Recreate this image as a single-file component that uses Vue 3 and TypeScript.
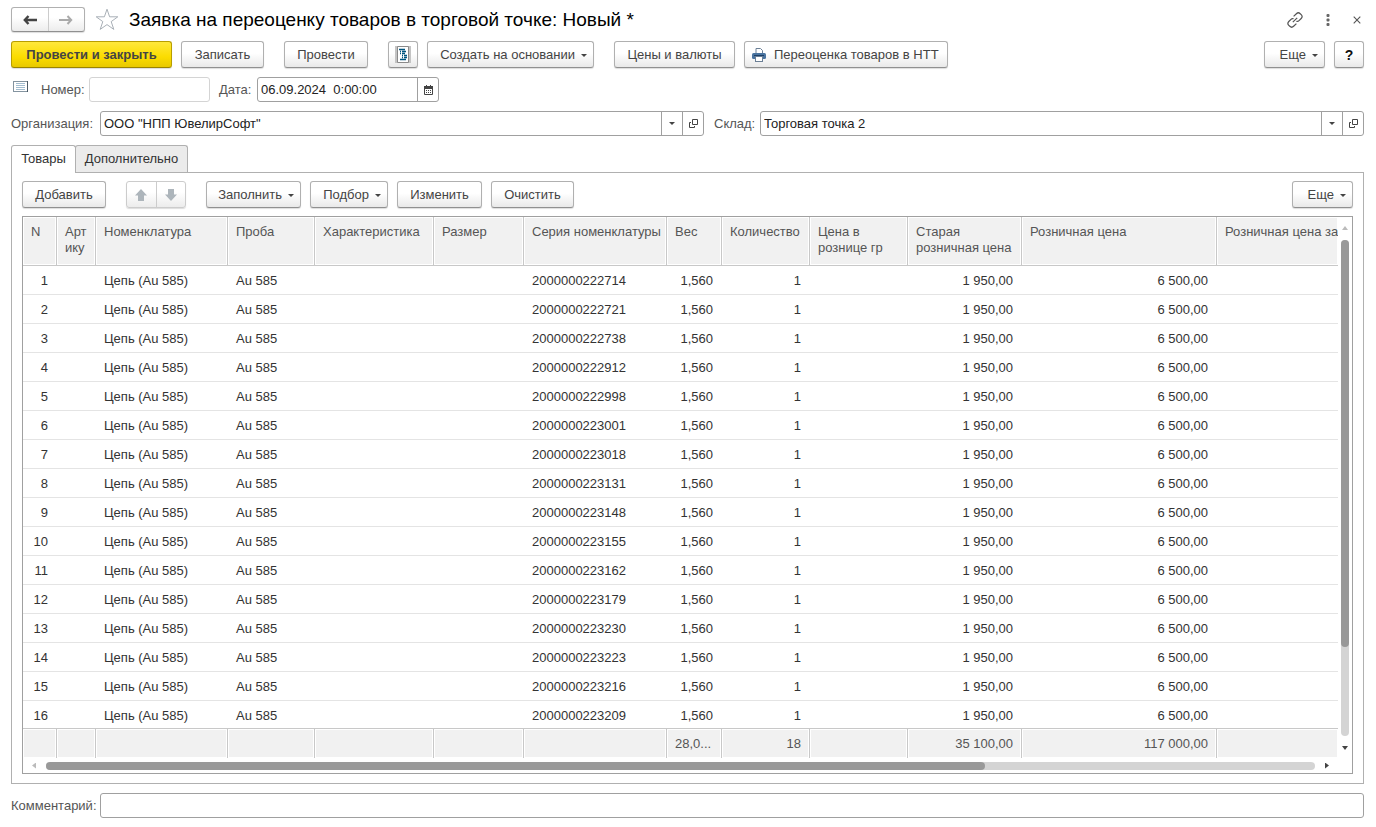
<script setup lang="ts">
import { ref } from 'vue'

interface Row {
  n: number
  item: string
  probe: string
  series: string
  weight: string
  qty: number
  oldPrice: string
  price: string
}

const seriesCodes: string[] = [
  '2000000222714', '2000000222721', '2000000222738', '2000000222912',
  '2000000222998', '2000000223001', '2000000223018', '2000000223131',
  '2000000223148', '2000000223155', '2000000223162', '2000000223179',
  '2000000223230', '2000000223223', '2000000223216', '2000000223209',
]

const rows: Row[] = seriesCodes.map((series, i) => ({
  n: i + 1,
  item: 'Цепь (Au 585)',
  probe: 'Au 585',
  series,
  weight: '1,560',
  qty: 1,
  oldPrice: '1 950,00',
  price: '6 500,00',
}))

const number = ref('')
const date = ref('06.09.2024  0:00:00')
const organization = ref('ООО "НПП ЮвелирСофт"')
const warehouse = ref('Торговая точка 2')
const comment = ref('')
const tab = ref<'goods' | 'extra'>('goods')
</script>

<template>
  <main class="page">
    <header class="title-bar">
      <div class="pair nav-pair">
        <button type="button" aria-label="Назад">
          <svg width="14" height="10" viewBox="0 0 14 10"><path d="M5.5 1 1.8 5 5.5 9M2 5H14" fill="none" stroke="#444" stroke-width="2.4" /></svg>
        </button>
        <button type="button" aria-label="Вперед">
          <svg width="14" height="10" viewBox="0 0 14 10"><path d="M8.5 1 12.2 5 8.5 9M12 5H0" fill="none" stroke="#aaa" stroke-width="2" /></svg>
        </button>
      </div>
      <button type="button" class="bare star" aria-label="Избранное">
        <svg width="24" height="23" viewBox="0 0 24 23"><path d="M12 1.2 14.6 8.8H22.8L16.2 13.6 18.8 21.4 12 16.6 5.2 21.4 7.8 13.6 1.2 8.8H9.4Z" fill="#fff" stroke="#a9b0b7" stroke-width="1" /></svg>
      </button>
      <h1>Заявка на переоценку товаров в торговой точке: Новый *</h1>
      <div class="window-tools">
        <button type="button" class="bare" aria-label="Ссылка">
          <svg width="16" height="16" viewBox="0 0 16 16" fill="none" stroke="#555" stroke-width="1.2">
            <path d="M6.6 4.4 9.4 1.7a2.7 2.7 0 0 1 3.8 0l1 1a2.7 2.7 0 0 1 0 3.8L12 8.7a2.4 2.4 0 0 1-2.6.5" />
            <path d="M9.4 11.6 6.6 14.3a2.7 2.7 0 0 1-3.8 0l-1-1a2.7 2.7 0 0 1 0-3.8L4 7.3a2.4 2.4 0 0 1 2.6-.5" />
            <path d="M5.8 10.2 10.2 5.8" />
          </svg>
        </button>
        <button type="button" class="bare" aria-label="Меню">
          <svg width="4" height="12" viewBox="0 0 4 12" fill="#666"><rect x="0.5" y="0" width="3" height="3" rx="1" /><rect x="0.5" y="4.5" width="3" height="3" rx="1" /><rect x="0.5" y="9" width="3" height="3" rx="1" /></svg>
        </button>
        <button type="button" class="bare" aria-label="Закрыть">
          <svg width="8" height="8" viewBox="0 0 8 8"><path d="M0.7 0.7 7.3 7.3M7.3 0.7 0.7 7.3" stroke="#555" stroke-width="1.1" /></svg>
        </button>
      </div>
    </header>

    <div class="toolbar">
      <button type="button" class="btn primary w-post-close">Провести и закрыть</button>
      <button type="button" class="btn w-xs">Записать</button>
      <button type="button" class="btn w-s spaced">Провести</button>
      <button type="button" class="btn square spaced" aria-label="Движения документа">
        <svg width="16" height="17" viewBox="0 0 16 17">
          <path d="M0 0H16V17H0Z" fill="#c4c4c4" />
          <path d="M2.5 0.5H13.5V16.5H2.5Z" fill="#fff" stroke="#8a8a8a" />
          <path d="M4 3.5H10M5 5.5H6M7 5.5H11M5 7.5H6M7 7.5H10M7 9.5H8M9 9.5H12M7 11.5H8M9 11.5H12M5 13.5H11" stroke="#00557f" stroke-width="1.4" />
        </svg>
      </button>
      <button type="button" class="btn w-create">Создать на основании<i class="caret"></i></button>
      <button type="button" class="btn w-prices spaced">Цены и валюты</button>
      <button type="button" class="btn w-print">
        <svg class="printer" width="14" height="14" viewBox="0 0 14 14">
          <path d="M4 5V0.5H8.5L10.5 2.5V5" fill="#fff" stroke="#6b7f96" />
          <rect x="0" y="5" width="14" height="6" rx="1.5" fill="#4a74a0" />
          <rect x="2" y="7" width="10" height="1" fill="#1d3f66" />
          <rect x="3.5" y="8.5" width="7" height="5" fill="#fff" stroke="#6b7f96" />
        </svg>Переоценка товаров в НТТ
      </button>
      <button type="button" class="btn w-more push">Еще<i class="caret"></i></button>
      <button type="button" class="btn square help">?</button>
    </div>

    <div class="field-row">
      <svg class="list-icon" width="15" height="11" viewBox="0 0 15 11">
        <rect x="0.5" y="0.5" width="14" height="10" fill="#fff" stroke="#8494a0" />
        <path d="M14.5 0V11" stroke="#4b5a66" />
        <path d="M3 2.5H12M3 4.5H12M3 6.5H12M3 8.5H12" stroke="#a3bdd0" />
      </svg>
      <label for="doc-number" class="label-number">Номер:</label>
      <input id="doc-number" v-model="number" class="box number" type="text" />
      <label for="doc-date" class="label-date">Дата:</label>
      <div class="box combo date">
        <input id="doc-date" v-model="date" type="text" />
        <button type="button" aria-label="Календарь">
          <svg width="9" height="10" viewBox="0 0 9 10">
            <path d="M0.5 1.5H8.5V9.5H0.5Z" fill="#fff" stroke="#444" />
            <path d="M0 1H9V4H0Z" fill="#444" />
            <path d="M2.5 0V2M6.5 0V2" stroke="#444" />
            <path d="M2 5.5H8M2 7.5H8" stroke="#444" stroke-dasharray="1 1" />
          </svg>
        </button>
      </div>
    </div>

    <div class="field-row">
      <label for="organization" class="label-main">Организация:</label>
      <div class="box combo grow">
        <input id="organization" v-model="organization" type="text" />
        <button type="button" aria-label="Выбрать организацию"><i class="caret"></i></button>
        <button type="button" aria-label="Открыть организацию">
          <svg width="9" height="9" viewBox="0 0 9 9" fill="none" stroke="#444"><path d="M3.5 0.5H8.5V5.5H3.5Z" /><path d="M2 3.5H0.5V8.5H5.5V7" /></svg>
        </button>
      </div>
      <label for="warehouse" class="label-stock">Склад:</label>
      <div class="box combo grow">
        <input id="warehouse" v-model="warehouse" type="text" />
        <button type="button" aria-label="Выбрать склад"><i class="caret"></i></button>
        <button type="button" aria-label="Открыть склад">
          <svg width="9" height="9" viewBox="0 0 9 9" fill="none" stroke="#444"><path d="M3.5 0.5H8.5V5.5H3.5Z" /><path d="M2 3.5H0.5V8.5H5.5V7" /></svg>
        </button>
      </div>
    </div>

    <div class="tabs" role="tablist">
      <button type="button" role="tab" class="tab-goods" :class="{ active: tab === 'goods' }" :aria-selected="tab === 'goods'" @click="tab = 'goods'">Товары</button>
      <button type="button" role="tab" class="tab-extra" :class="{ active: tab === 'extra' }" :aria-selected="tab === 'extra'" @click="tab = 'extra'">Дополнительно</button>
    </div>

    <section class="panel">
      <div class="toolbar inner">
        <button type="button" class="btn w-s">Добавить</button>
        <div class="pair move-pair">
          <button type="button" aria-label="Переместить вверх">
            <svg width="12" height="12" viewBox="0 0 12 12"><path d="M6 0 12 6.5H9V12H3V6.5H0Z" fill="#adb5bb" /></svg>
          </button>
          <button type="button" aria-label="Переместить вниз">
            <svg width="12" height="12" viewBox="0 0 12 12"><path d="M6 12 12 5.5H9V0H3V5.5H0Z" fill="#adb5bb" /></svg>
          </button>
        </div>
        <button type="button" class="btn w-fill spaced">Заполнить<i class="caret"></i></button>
        <button type="button" class="btn w-pick">Подбор<i class="caret"></i></button>
        <button type="button" class="btn w-edit">Изменить</button>
        <button type="button" class="btn w-xs">Очистить</button>
        <button type="button" class="btn w-more push">Еще<i class="caret"></i></button>
      </div>

      <div class="grid-frame">
        <div class="viewport">
          <table>
            <colgroup>
              <col class="c-n" /><col class="c-art" /><col class="c-item" /><col class="c-probe" />
              <col class="c-char" /><col class="c-size" /><col class="c-series" /><col class="c-weight" />
              <col class="c-qty" /><col class="c-gram" /><col class="c-old" /><col class="c-price" /><col />
            </colgroup>
            <thead>
              <tr>
                <th>N</th>
                <th>Арт<br />ику</th>
                <th>Номенклатура</th>
                <th>Проба</th>
                <th>Характеристика</th>
                <th>Размер</th>
                <th>Серия номенклатуры</th>
                <th>Вес</th>
                <th>Количество</th>
                <th>Цена в<br />рознице гр</th>
                <th>Старая<br />розничная цена</th>
                <th>Розничная цена</th>
                <th>Розничная цена за</th>
              </tr>
            </thead>
            <tbody>
              <tr v-for="row in rows" :key="row.n">
                <td class="num">{{ row.n }}</td>
                <td></td>
                <td>{{ row.item }}</td>
                <td>{{ row.probe }}</td>
                <td></td>
                <td></td>
                <td>{{ row.series }}</td>
                <td class="num">{{ row.weight }}</td>
                <td class="num">{{ row.qty }}</td>
                <td></td>
                <td class="num">{{ row.oldPrice }}</td>
                <td class="num">{{ row.price }}</td>
                <td></td>
              </tr>
            </tbody>
            <tfoot>
              <tr>
                <td></td><td></td><td></td><td></td><td></td><td></td><td></td>
                <td>28,0...</td>
                <td class="num">18</td>
                <td></td>
                <td class="num">35 100,00</td>
                <td class="num">117 000,00</td>
                <td></td>
              </tr>
            </tfoot>
          </table>
        </div>
        <div class="vscroll">
          <i class="tri up"></i>
          <div class="vtrack"><div class="vthumb"></div></div>
          <i class="tri down"></i>
        </div>
        <div class="hscroll">
          <i class="tri left"></i>
          <div class="htrack"><div class="hthumb"></div></div>
          <i class="tri right"></i>
        </div>
      </div>
    </section>

    <div class="field-row comment-row">
      <label for="comment" class="label-main">Комментарий:</label>
      <input id="comment" v-model="comment" class="box grow" type="text" />
    </div>
  </main>
</template>

<style>
body {
  background: #fff;
}
</style>

<style scoped>
* {
  box-sizing: border-box;
}
.page {
  display: flex;
  flex-direction: column;
  height: 100vh;
  min-height: 400px;
  padding: 7px 12px 9px 11px;
  overflow: hidden;
  background: #fff;
  color: #333;
  font: 13px/16px "Liberation Sans", Arial, sans-serif;
}
button,
input {
  margin: 0;
  padding: 0;
  font: inherit;
  color: inherit;
}
button {
  display: flex;
  align-items: center;
  justify-content: center;
  white-space: nowrap;
}
svg {
  display: block;
  flex: none;
}
.bare {
  border: 0;
  background: none;
}

.title-bar {
  display: flex;
  align-items: center;
  height: 25px;
}
.pair {
  display: flex;
  border: 1px solid #b0b0b0;
  border-bottom-color: #909090;
  border-radius: 3px;
  background: linear-gradient(#fff 40%, #ececec);
  box-shadow: 0 1px 1px #ddd;
}
.pair button {
  flex: 1;
  border: 0;
  background: none;
}
.pair button + button {
  border-left: 1px solid #ccc;
}
.nav-pair {
  width: 74px;
  height: 25px;
}
.star {
  margin-left: 10px;
}
h1 {
  margin: 0 0 0 10px;
  font-size: 19px;
  line-height: 24px;
  font-weight: 400;
  color: #000;
  white-space: nowrap;
}
.window-tools {
  display: flex;
  align-items: center;
  gap: 23px;
  margin-left: auto;
  padding-right: 3px;
}

.toolbar {
  display: flex;
  gap: 9px;
  margin-top: 9px;
}
.btn {
  height: 27px;
  padding: 0;
  border: 1px solid #b0b0b0;
  border-bottom-color: #909090;
  border-radius: 3px;
  background: linear-gradient(#fff 45%, #e9e9e9);
  box-shadow: 0 1px 1px #ddd;
  color: #444;
}
.primary {
  border-color: #b89e00;
  border-bottom-color: #9a8400;
  background: linear-gradient(#ffe83c, #fbdc00 60%, #e8c900);
  font-weight: 700;
}
.spaced {
  margin-left: 11px;
}
.push {
  margin-left: auto;
}
.square {
  width: 30px;
}
.help {
  font-size: 14px;
  font-weight: 700;
  color: #111;
}
.w-xs {
  width: 83px;
}
.w-s {
  width: 84px;
}
.w-post-close {
  width: 161px;
}
.w-create {
  width: 167px;
}
.w-prices {
  width: 121px;
}
.w-print {
  width: 204px;
}
.w-more {
  width: 61px;
}
.w-fill {
  width: 95px;
}
.w-pick {
  width: 78px;
}
.w-edit {
  width: 85px;
}
.caret {
  width: 6px;
  height: 3px;
  background: #444;
  clip-path: polygon(0 0, 100% 0, 50% 100%);
}
.btn .caret {
  margin: 2px 0 0 6px;
}
.btn:has(.caret) {
  justify-content: flex-end;
  padding-right: 6px;
}
.btn:has(.printer) {
  justify-content: flex-start;
  padding-left: 7px;
}
.printer {
  margin-right: 8px;
}

.field-row {
  display: flex;
  align-items: center;
  margin-top: 9px;
}
.field-row label {
  flex: none;
  color: #555;
  white-space: nowrap;
}
.list-icon {
  margin: 0 13px 6px 2px;
}
.label-number {
  width: 48px;
}
.label-date {
  width: 38px;
  margin-left: 9px;
}
.label-main {
  width: 89px;
}
.label-stock {
  width: 46px;
  margin-left: 10px;
}
.box {
  height: 25px;
  border: 1px solid #a0a0a0;
  border-radius: 3px;
  background: #fff;
  color: #222;
}
.number {
  width: 121px;
  border-color: #d4d4d4;
}
.combo {
  display: flex;
  overflow: hidden;
}
.combo input {
  flex: 1;
  min-width: 0;
  padding: 0 3px;
  border: 0;
  outline: 0;
  background: none;
  white-space: pre;
}
.combo button {
  width: 21px;
  border: 0;
  border-left: 1px solid #a0a0a0;
  background: none;
}
.date {
  width: 182px;
}
.grow {
  flex: 1;
  min-width: 0;
}

.tabs {
  display: flex;
  margin-top: 9px;
}
.tabs button {
  height: 27px;
  border: 1px solid #b0b0b0;
  border-bottom: 0;
  border-radius: 3px 3px 0 0;
  background: #ebebeb;
  color: #333;
}
.tabs button.active {
  height: 28px;
  margin-bottom: -1px;
  padding-bottom: 1px;
  background: #fff;
  z-index: 1;
}
.tab-goods {
  width: 65px;
}
.tab-extra {
  width: 113px;
  margin-left: -1px;
}
.panel {
  display: flex;
  flex: 1;
  flex-direction: column;
  min-height: 0;
  padding: 8px 10px 9px;
  border: 1px solid #b0b0b0;
}
.inner {
  margin-top: 0;
}
.move-pair {
  width: 60px;
  margin-left: 11px;
  border-color: #ccc;
}

.grid-frame {
  display: grid;
  flex: 1;
  grid-template: minmax(0, 1fr) 15px / minmax(0, 1fr) 14px;
  min-height: 0;
  margin-top: 8px;
  border: 1px solid #a0a0a0;
}
.viewport {
  overflow: hidden;
}
table {
  width: 100%;
  border-collapse: separate;
  border-spacing: 0;
  table-layout: fixed;
}
.c-n { width: 34px; }
.c-art { width: 39px; }
.c-item { width: 132px; }
.c-probe { width: 87px; }
.c-char { width: 119px; }
.c-size { width: 90px; }
.c-series { width: 143px; }
.c-weight { width: 55px; }
.c-qty { width: 88px; }
.c-gram { width: 98px; }
.c-old { width: 114px; }
.c-price { width: 195px; }
th,
td {
  padding: 0 8px;
  overflow: hidden;
  text-align: left;
  white-space: nowrap;
}
th {
  position: sticky;
  top: 0;
  height: 49px;
  padding-top: 7px;
  border-right: 1px solid #c8c8c8;
  border-bottom: 1px solid #c8c8c8;
  background: #f1f1f1;
  box-shadow: inset 0 0 0 1px #fff;
  color: #555;
  font-weight: 400;
  vertical-align: top;
}
th:last-child,
tfoot td:last-child {
  padding-right: 0;
  border-right: 0;
}
tbody td {
  height: 29px;
  padding: 2px 9px 0 8px;
  border-bottom: 1px solid #e4e4e4;
}
.num {
  text-align: right;
}
tfoot td {
  position: sticky;
  bottom: 0;
  height: 30px;
  border-top: 1px solid #c8c8c8;
  border-right: 1px solid #c8c8c8;
  background: #f1f1f1;
  box-shadow: inset 0 0 0 1px #fff;
  color: #555;
}
.vscroll {
  display: flex;
  flex-direction: column;
  align-items: center;
  padding: 9px 0 8px;
}
.vtrack {
  flex: 1;
  width: 8px;
  margin: 10px 0;
  border-radius: 4px;
  background: #d4d4d4;
}
.vthumb {
  height: 82%;
  border-radius: 4px;
  background: #999;
}
.hscroll {
  display: flex;
  align-items: center;
  padding: 0 9px;
}
.htrack {
  flex: 1;
  height: 8px;
  margin: 0 10px;
  border-radius: 4px;
  background: #d4d4d4;
}
.hthumb {
  width: 74%;
  height: 8px;
  border-radius: 4px;
  background: #999;
}
.tri {
  flex: none;
  background: #444;
}
.up,
.down {
  width: 6px;
  height: 4px;
}
.left,
.right {
  width: 4px;
  height: 6px;
}
.up {
  background: #bbb;
  clip-path: polygon(50% 0, 100% 100%, 0 100%);
}
.down {
  clip-path: polygon(0 0, 100% 0, 50% 100%);
}
.left {
  background: #bbb;
  clip-path: polygon(0 50%, 100% 0, 100% 100%);
}
.right {
  clip-path: polygon(0 0, 100% 50%, 0 100%);
}
</style>
